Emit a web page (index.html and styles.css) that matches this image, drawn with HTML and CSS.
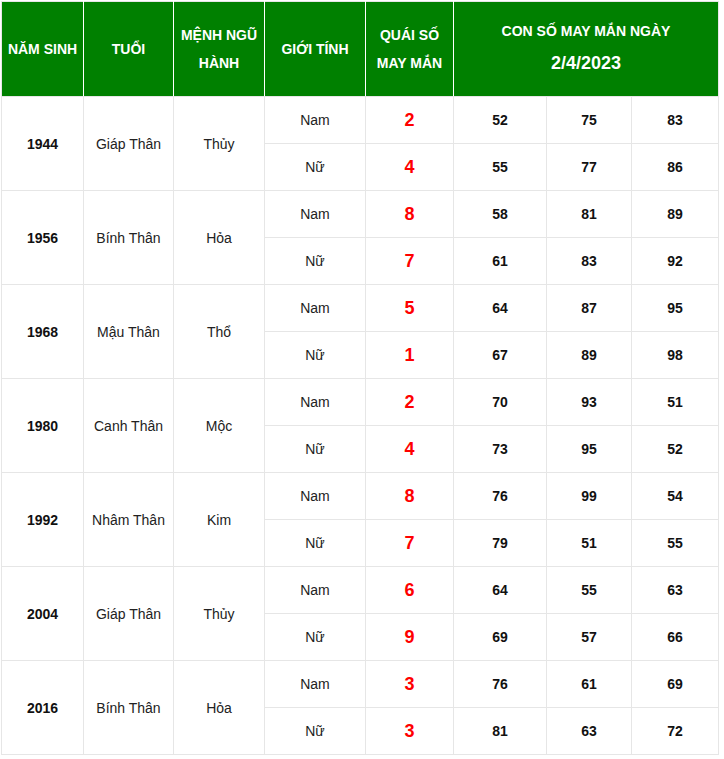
FILE: index.html
```html
<!DOCTYPE html>
<html lang="vi">
<head>
<meta charset="utf-8">
<title>Con số may mắn</title>
<link rel="stylesheet" href="styles.css">
</head>
<body>
<div class="wrap">
<table class="lucky">
  <colgroup>
    <col class="c1"><col class="c2"><col class="c3"><col class="c4"><col class="c5"><col class="c6"><col class="c7"><col class="c8">
  </colgroup>
  <thead>
    <tr>
      <th class="nowrap">NĂM SINH</th>
      <th>TUỔI</th>
      <th>MỆNH NGŨ HÀNH</th>
      <th>GIỚI TÍNH</th>
      <th>QUÁI SỐ MAY MẮN</th>
      <th colspan="3">CON SỐ MAY MẮN NGÀY<br><span class="date">2/4/2023</span></th>
    </tr>
  </thead>
  <tbody>
    <tr><td rowspan="2" class="year">1944</td><td rowspan="2">Giáp Thân</td><td rowspan="2">Thủy</td><td>Nam</td><td class="q">2</td><td class="n">52</td><td class="n">75</td><td class="n">83</td></tr>
    <tr><td>Nữ</td><td class="q">4</td><td class="n">55</td><td class="n">77</td><td class="n">86</td></tr>
    <tr><td rowspan="2" class="year">1956</td><td rowspan="2">Bính Thân</td><td rowspan="2">Hỏa</td><td>Nam</td><td class="q">8</td><td class="n">58</td><td class="n">81</td><td class="n">89</td></tr>
    <tr><td>Nữ</td><td class="q">7</td><td class="n">61</td><td class="n">83</td><td class="n">92</td></tr>
    <tr><td rowspan="2" class="year">1968</td><td rowspan="2">Mậu Thân</td><td rowspan="2">Thổ</td><td>Nam</td><td class="q">5</td><td class="n">64</td><td class="n">87</td><td class="n">95</td></tr>
    <tr><td>Nữ</td><td class="q">1</td><td class="n">67</td><td class="n">89</td><td class="n">98</td></tr>
    <tr><td rowspan="2" class="year">1980</td><td rowspan="2">Canh Thân</td><td rowspan="2">Mộc</td><td>Nam</td><td class="q">2</td><td class="n">70</td><td class="n">93</td><td class="n">51</td></tr>
    <tr><td>Nữ</td><td class="q">4</td><td class="n">73</td><td class="n">95</td><td class="n">52</td></tr>
    <tr><td rowspan="2" class="year">1992</td><td rowspan="2">Nhâm Thân</td><td rowspan="2">Kim</td><td>Nam</td><td class="q">8</td><td class="n">76</td><td class="n">99</td><td class="n">54</td></tr>
    <tr><td>Nữ</td><td class="q">7</td><td class="n">79</td><td class="n">51</td><td class="n">55</td></tr>
    <tr><td rowspan="2" class="year">2004</td><td rowspan="2">Giáp Thân</td><td rowspan="2">Thủy</td><td>Nam</td><td class="q">6</td><td class="n">64</td><td class="n">55</td><td class="n">63</td></tr>
    <tr><td>Nữ</td><td class="q">9</td><td class="n">69</td><td class="n">57</td><td class="n">66</td></tr>
    <tr><td rowspan="2" class="year">2016</td><td rowspan="2">Bính Thân</td><td rowspan="2">Hỏa</td><td>Nam</td><td class="q">3</td><td class="n">76</td><td class="n">61</td><td class="n">69</td></tr>
    <tr><td>Nữ</td><td class="q">3</td><td class="n">81</td><td class="n">63</td><td class="n">72</td></tr>
  </tbody>
</table>
</div>
</body>
</html>
```
FILE: styles.css
```css
html, body {
  margin: 0;
  padding: 0;
  background: #fff;
}
body {
  font-family: "Liberation Sans", Arial, sans-serif;
  color: #222;
}
.wrap {
  padding: 1px 0 0 1px;
}
.lucky {
  border-collapse: collapse;
  table-layout: fixed;
  width: 718px;
  border: 1px solid #e6e6e6;
}
.c1 { width: 82px; }
.c2 { width: 90px; }
.c3 { width: 91px; }
.c4 { width: 101px; }
.c5 { width: 88px; }
.c6 { width: 93px; }
.c7 { width: 85px; }
.c8 { width: 87px; }
.lucky th {
  background: #008000;
  color: #fff;
  font-size: 14px;
  font-weight: bold;
  line-height: 2;
  height: 94px;
  padding: 0 3px;
  text-align: center;
  vertical-align: middle;
  border: 1px solid #fff;
  border-top-color: #e6e6e6;
  border-bottom-color: #e6e6e6;
}
.lucky th.nowrap { white-space: nowrap; padding: 0; }
.lucky th:first-child { border-left-color: #e6e6e6; }
.lucky th:last-child { border-right-color: #e6e6e6; }
.lucky th .date {
  font-size: 18px;
}
.lucky td {
  border: 1px solid #e6e6e6;
  height: 46px;
  padding: 0 4px;
  text-align: center;
  vertical-align: middle;
  font-size: 14px;
  color: #222;
}
.lucky td.year {
  font-weight: bold;
  color: #111;
}
.lucky td.q {
  color: #ff0000;
  font-weight: bold;
  font-size: 18px;
}
.lucky td.n {
  font-weight: bold;
  color: #111;
}
```
